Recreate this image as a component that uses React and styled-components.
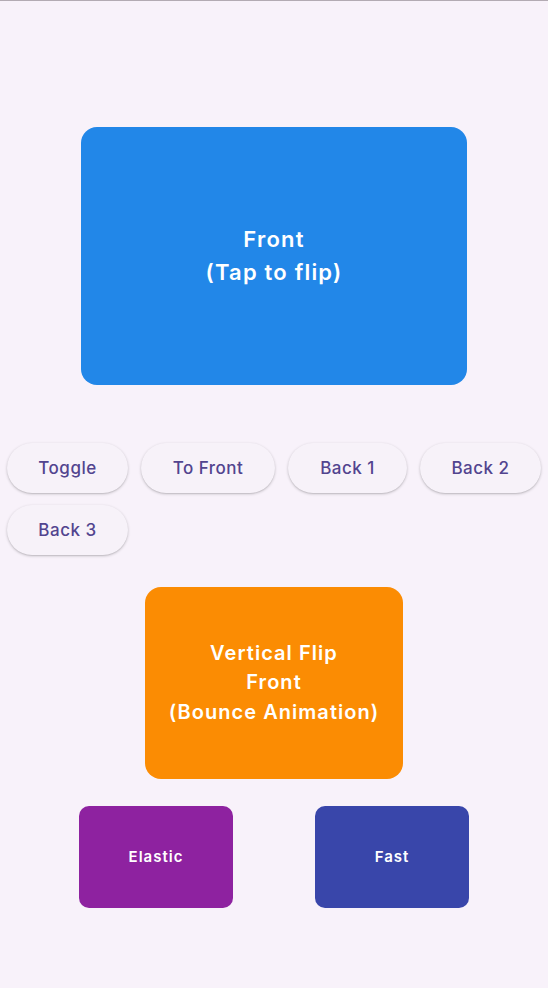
import React from 'react'
import styled, { createGlobalStyle } from 'styled-components'

const GlobalStyle = createGlobalStyle`
  html, body {
    margin: 0;
    padding: 0;
    background: #f8f2fa;
  }
  body {
    font-family: Inter, Roboto, "Noto Sans", sans-serif;
  }
`

const Screen = styled.div`
  width: 548px;
  min-height: 988px;
  box-sizing: border-box;
  border-top: 1px solid #b3abb3;
  display: flex;
  flex-direction: column;
  align-items: center;
  padding-top: 126px;
`

const Card = styled.div`
  width: ${p => p.w}px;
  height: ${p => p.h}px;
  background: ${p => p.bg};
  border-radius: ${p => p.radius || 16}px;
  display: flex;
  align-items: center;
  justify-content: center;
  text-align: center;
  color: #ffffff;
  font-weight: 600;
  font-size: ${p => p.size}px;
  line-height: ${p => p.lh}px;
  letter-spacing: ${p => p.ls || 0.4}px;
  white-space: pre-line;
  flex-shrink: 0;
`

const Buttons = styled.div`
  align-self: stretch;
  display: flex;
  flex-wrap: wrap;
  column-gap: 13px;
  row-gap: 12px;
  padding: 0 7px;
  margin-top: 58px;
  margin-bottom: 32px;
`

const Button = styled.button`
  width: ${p => p.w}px;
  height: 50px;
  padding: 0;
  border: none;
  border-radius: 25px;
  background: #f7f2f9;
  box-shadow: 0 1px 3px rgba(0, 0, 0, 0.22), 0 1px 1px rgba(0, 0, 0, 0.06);
  color: #52448f;
  font-family: Inter, Roboto, "Noto Sans", sans-serif;
  font-size: 17px;
  font-weight: 500;
  letter-spacing: 0.5px;
  cursor: pointer;
`

const Small = styled.div`
  align-self: stretch;
  display: flex;
  justify-content: space-between;
  padding: 0 79px;
  margin-top: 27px;
`

const buttons = [
  { label: 'Toggle', w: 121 },
  { label: 'To Front', w: 134 },
  { label: 'Back 1', w: 119 },
  { label: 'Back 2', w: 121 },
  { label: 'Back 3', w: 121 },
]

export default function App() {
  return (
    <>
      <GlobalStyle />
      <Screen>
        <Card w={386} h={258} bg="#2287e8" size={22} lh={33} ls={1.2}>
          {'Front\n(Tap to flip)'}
        </Card>
        <Buttons>
          {buttons.map(b => (
            <Button key={b.label} w={b.w}>{b.label}</Button>
          ))}
        </Buttons>
        <Card w={258} h={192} bg="#fb8c03" size={20} lh={29.5} ls={1.05}>
          {'Vertical Flip\nFront\n(Bounce Animation)'}
        </Card>
        <Small>
          <Card w={154} h={102} bg="#8e22a0" size={15} lh={20} radius={10} ls={1}>Elastic</Card>
          <Card w={154} h={102} bg="#3946aa" size={15} lh={20} radius={10} ls={1}>Fast</Card>
        </Small>
      </Screen>
    </>
  )
}
